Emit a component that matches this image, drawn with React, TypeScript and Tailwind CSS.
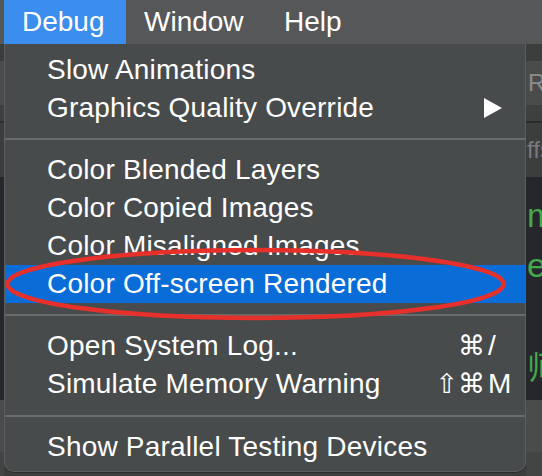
import React from "react";

type Item =
  | { kind: "item"; label: string; active?: boolean; submenu?: boolean; mods?: string; key?: string }
  | { kind: "sep" };

const ITEMS: Item[] = [
  { kind: "item", label: "Slow Animations" },
  { kind: "item", label: "Graphics Quality Override", submenu: true },
  { kind: "sep" },
  { kind: "item", label: "Color Blended Layers" },
  { kind: "item", label: "Color Copied Images" },
  { kind: "item", label: "Color Misaligned Images" },
  { kind: "item", label: "Color Off-screen Rendered", active: true },
  { kind: "sep" },
  { kind: "item", label: "Open System Log...", mods: "⌘", key: "/" },
  { kind: "item", label: "Simulate Memory Warning", mods: "⇧⌘", key: "M" },
  { kind: "sep" },
  { kind: "item", label: "Show Parallel Testing Devices" },
];

const FONT = { fontFamily: '"Liberation Sans", "DejaVu Sans", Arial, sans-serif' };

const SideStrip = ({ right }: { right?: boolean }) => (
  <div className="flex flex-col h-full overflow-hidden text-[24px] leading-none whitespace-nowrap">
    <div className="h-[17px] bg-[#3b3d3d]"></div>
    <div className="h-[44px] bg-[#4a4c4c] flex items-center text-[#8b8d8d] pl-[2px]">
      {right ? "R" : ""}
    </div>
    <div className="h-[16px] bg-[#3e4040]"></div>
    <div className="h-[2px] bg-[#2a2c2c]"></div>
    <div className="h-[54px] bg-[#3c3e3e] flex items-center text-[#77797a] pl-[1px]">
      {right ? "ffs" : ""}
    </div>
    <div className="h-[223px] bg-[#25272c] flex flex-col pt-[13px] pl-[1px] text-[34px] leading-[50px] text-[#44a84c]">
      {right && (
        <>
          <span>m</span>
          <span>e</span>
          <span>&nbsp;</span>
          <span style={{ fontFamily: '"Noto Sans CJK SC", sans-serif' }} className="text-[32px]">
            师
          </span>
        </>
      )}
    </div>
    <div className="h-[52px] bg-[#4a4c4c]"></div>
    <div className="flex-1 bg-[#434545]"></div>
  </div>
);

const Row = ({ item }: { item: Extract<Item, { kind: "item" }> }) => (
  <div
    className={`h-[37.75px] flex items-center pl-[42px] text-[28px] text-white ${
      item.active ? "bg-[#0a6cd6]" : ""
    }`}
  >
    <span className="flex-1 whitespace-nowrap tracking-[0.2px]">{item.label}</span>
    {item.submenu && (
      <svg width="18" height="20" viewBox="0 0 18 20" className="mr-[23px]">
        <polygon points="0,0 18,10 0,20" fill="#ffffff" />
      </svg>
    )}
    {item.key && (
      <div className="flex items-center mr-[12px]">
        <span
          className="w-[60px] text-right text-[27px]"
          style={{ fontFamily: '"DejaVu Sans", sans-serif' }}
        >
          {item.mods}
        </span>
        <span className="w-[28px] pl-[3px] text-[28px]">{item.key}</span>
      </div>
    )}
  </div>
);

export default function App() {
  return (
    <div className="w-[542px] h-[476px] relative overflow-hidden bg-[#3b3d3d] select-none" style={FONT}>
      {/* menu bar */}
      <div className="h-[44px] bg-[#565758] flex items-stretch pl-[4px] text-[28px] text-white">
        <div className="w-[122px] pl-[18px] bg-[#3b8eed] flex items-center">Debug</div>
        <div className="w-[140px] pl-[18px] flex items-center">Window</div>
        <div className="pl-[18px] flex items-center">Help</div>
      </div>

      <div className="flex h-[432px]">
        <div className="w-[4px] shrink-0">
          <SideStrip />
        </div>

        {/* dropdown */}
        <div className="w-[522px] shrink-0 h-[428px] bg-[#484b4b] rounded-b-[10px] border-x border-b border-[#5c5f5f] pt-[7px] pb-[5px] flex flex-col shadow-[0_1px_0_#2a2c2c]">
          {ITEMS.map((item, i) =>
            item.kind === "sep" ? (
              <div key={i} className="h-[25px] flex items-center">
                <div className="w-full h-[2px] bg-[#696c6c]"></div>
              </div>
            ) : (
              <Row key={i} item={item} />
            )
          )}
        </div>

        <div className="flex-1 min-w-0">
          <SideStrip right />
        </div>
      </div>

      {/* red annotation */}
      <svg className="absolute left-0 top-0 pointer-events-none" width="542" height="476">
        <ellipse cx="255.5" cy="284" rx="248" ry="34" fill="none" stroke="#e8302a" strokeWidth="4.5" />
      </svg>
    </div>
  );
}
